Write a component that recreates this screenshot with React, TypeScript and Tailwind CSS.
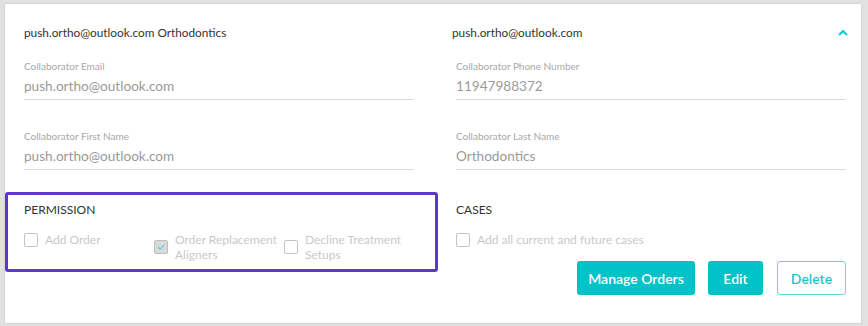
import React from "react";

const font = { fontFamily: "Lato, 'Noto Sans', sans-serif" };

function Field({ label, value }: { label: string; value: string }) {
  return (
    <div className="flex flex-col border-b border-[#dcdcdc] pb-[3px]">
      <div className="h-[12px] text-[10px] leading-[12px] text-[#a8a8a8]">{label}</div>
      <div className="mt-[4px] h-[20px] text-[13.6px] leading-[20px] text-[#9a9a9a]">{value}</div>
    </div>
  );
}

function Box({ checked = false }: { checked?: boolean }) {
  return (
    <span
      className={
        "flex h-[14px] w-[14px] shrink-0 items-center justify-center rounded-[2px] border " +
        (checked ? "border-[#bdbdbd] bg-[#dadada]" : "border-[#c4c4c4] bg-white")
      }
    >
      {checked && (
        <svg width="10" height="10" viewBox="0 0 10 10">
          <path d="M2 5.2 L4.2 7.2 L8.2 2.8" fill="none" stroke="#4fd0d3" strokeWidth="1.2" />
        </svg>
      )}
    </span>
  );
}

function Check({ lines, checked = false }: { lines: string[]; checked?: boolean }) {
  return (
    <div className="flex w-[130px] items-center gap-[7px]">
      <Box checked={checked} />
      <div className="whitespace-nowrap text-[12px] leading-[15px] text-[#c9c9c9]">
        {lines.map((l) => (
          <div key={l}>{l}</div>
        ))}
      </div>
    </div>
  );
}

export default function App() {
  return (
    <div className="h-[326px] w-[868px] bg-[#e1e1e1] pl-[5px] pt-[4px]" style={font}>
      <div className="h-[319px] w-[856px] bg-white shadow-[0_0_2px_rgba(0,0,0,0.15)]">
        <div className="grid grid-cols-[390px_390px] gap-x-[42px] pl-[19px] pt-[22px]">
          <div className="h-[14px] text-[11.8px] leading-[14px] text-[#333]">
            push.ortho@outlook.com Orthodontics
          </div>
          <div className="-ml-[4px] flex h-[14px] items-center justify-between text-[11.8px] leading-[14px] text-[#333]">
            <span>push.ortho@outlook.com</span>
            <svg width="12" height="8" viewBox="0 0 12 8" className="mr-[-3px]">
              <path d="M2 6 L6 2 L10 6" fill="none" stroke="#14c6cb" strokeWidth="2" />
            </svg>
          </div>
          <div className="mt-[20px]">
            <Field label="Collaborator Email" value="push.ortho@outlook.com" />
          </div>
          <div className="mt-[20px]">
            <Field label="Collaborator Phone Number" value="11947988372" />
          </div>
          <div className="mt-[30px]">
            <Field label="Collaborator First Name" value="push.ortho@outlook.com" />
          </div>
          <div className="mt-[30px]">
            <Field label="Collaborator Last Name" value="Orthodontics" />
          </div>
        </div>
        <div className="mt-[22px] flex items-start">
          <div className="h-[80px] w-[433px] rounded-[3px] border-[3px] border-[#5c37c8] pl-[16px] pt-[8px]">
            <div className="h-[14px] text-[12px] leading-[14px] text-[#333]">PERMISSION</div>
            <div className="mt-[15px] flex items-start">
              <Check lines={["Add Order"]} />
              <Check lines={["Order Replacement", "Aligners"]} checked />
              <Check lines={["Decline Treatment", "Setups"]} />
            </div>
          </div>
          <div className="ml-[18px] flex-1 pr-[15px] pt-[11px]">
            <div className="h-[14px] text-[12px] leading-[14px] text-[#333]">CASES</div>
            <div className="mt-[15px] flex items-center gap-[7px]">
              <Box />
              <span className="text-[12px] leading-[15px] text-[#c9c9c9]">
                Add all current and future cases
              </span>
            </div>
            <div className="mt-[14px] flex justify-end gap-[13px]">
              <button className="h-[34px] w-[118px] rounded-[3px] bg-[#00c2c7] text-[14px] font-semibold text-white">
                Manage Orders
              </button>
              <button className="h-[34px] w-[55px] rounded-[3px] bg-[#00c2c7] text-[14px] font-semibold text-white">
                Edit
              </button>
              <button className="ml-[1px] h-[34px] w-[69px] rounded-[3px] border border-[#63dadd] bg-white text-[14px] font-semibold text-[#1cc6cb]">
                Delete
              </button>
            </div>
          </div>
        </div>
      </div>
    </div>
  );
}
